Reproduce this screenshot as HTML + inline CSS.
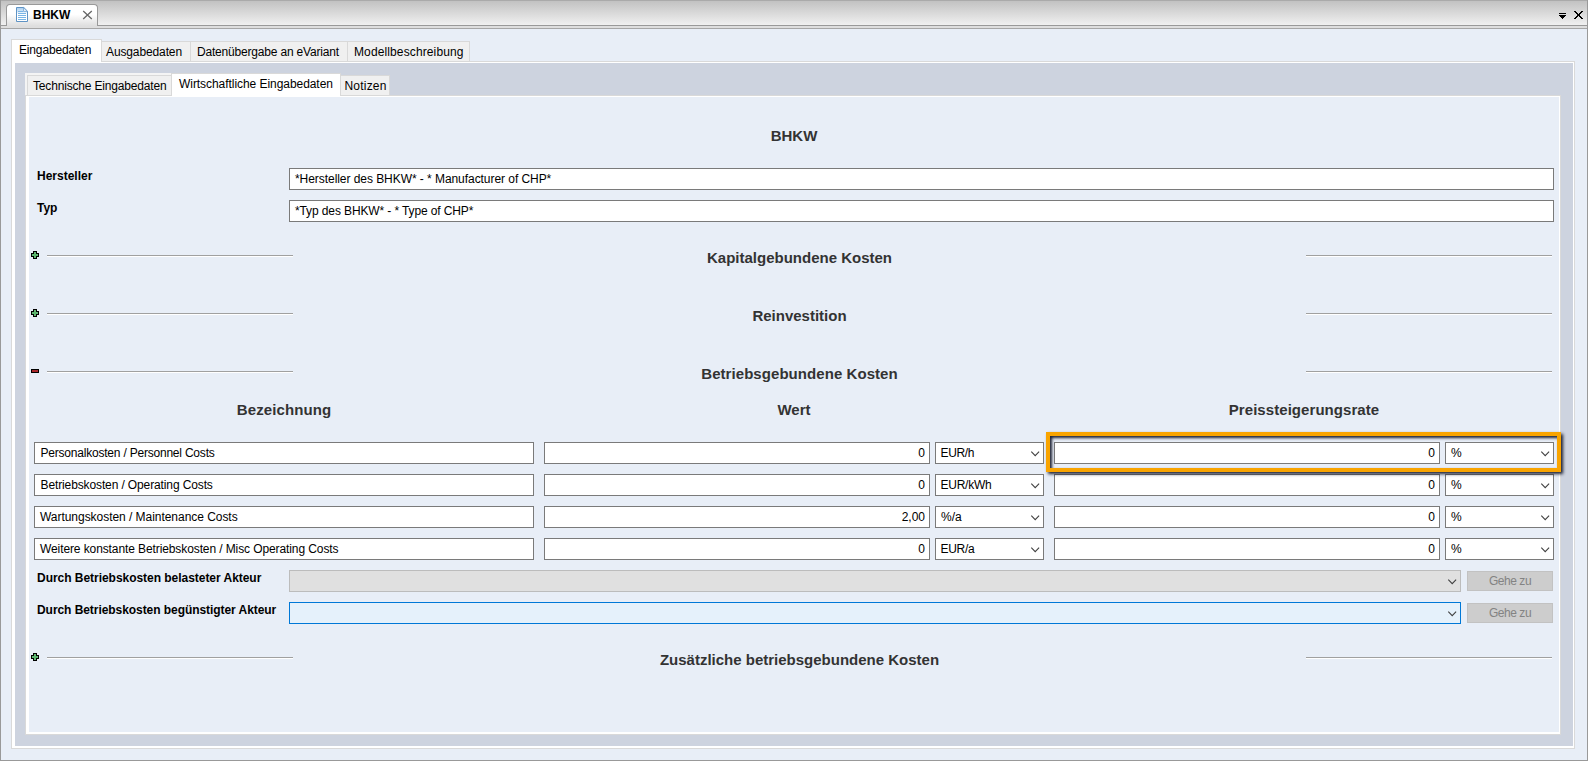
<!DOCTYPE html>
<html lang="de">
<head>
<meta charset="utf-8">
<title>BHKW</title>
<style>
html,body{margin:0;padding:0;}
body{width:1588px;height:761px;overflow:hidden;position:relative;background:#e8eef7;
  font-family:"Liberation Sans",sans-serif;font-size:12px;color:#000;}
.a{position:absolute;box-sizing:border-box;}
.t{position:absolute;white-space:nowrap;line-height:16px;font-size:12px;}
.b{font-weight:bold;}
.h{position:absolute;white-space:nowrap;font-weight:bold;font-size:15px;line-height:18px;color:#333;text-align:center;}
.box{position:absolute;box-sizing:border-box;background:#fff;border:1px solid #7a7a7a;height:22px;}
.ln{position:absolute;height:1px;background:#a0a0a0;box-shadow:0 1px 0 #fff;}
.tab{position:absolute;box-sizing:border-box;background:#f0f0f0;border:1px solid #d9d9d9;}
</style>
</head>
<body>
<!-- window frame / header -->
<div class="a" id="hdr" style="left:0;top:0;width:1588px;height:25px;background:linear-gradient(#c2c2c2,#f0f0f0);border-top:1px solid #aaa;"></div>
<div class="a" style="left:0;top:25px;width:1588px;height:1px;background:#999;"></div>
<div class="a" style="left:0;top:26px;width:1588px;height:2px;background:#dedede;"></div>
<div class="a" style="left:0;top:28px;width:1588px;height:1px;background:#a6a6a6;"></div>
<div class="a" style="left:0;top:0;width:1px;height:761px;background:#999;"></div>
<div class="a" style="left:1587px;top:0;width:1px;height:761px;background:#999;"></div>
<div class="a" style="left:0;top:760px;width:1588px;height:1px;background:#999;"></div>
<!-- document tab -->
<div class="a" id="doctab" style="left:6px;top:4px;width:92px;height:22px;border:1px solid #999;border-bottom:none;border-radius:4px 4px 0 0;background:linear-gradient(#fff 0%,#fff 45%,#dedede 100%);"></div>
<svg class="a" style="left:15px;top:6px;" width="14" height="17" viewBox="0 0 14 17">
  <defs><linearGradient id="dg" x1="0" y1="0" x2="0" y2="1"><stop offset="0" stop-color="#a9cdee"/><stop offset="0.3" stop-color="#d6e8f8"/><stop offset="0.45" stop-color="#fff"/><stop offset="1" stop-color="#fff"/></linearGradient></defs>
  <path d="M1.5 1.5h7.3l3.7 3.7v10.3h-11z" fill="url(#dg)" stroke="#5f93c4" stroke-width="1"/>
  <path d="M8.6 1.8v3.6h3.6z" fill="#fff" stroke="#6c9fd0" stroke-width="0.8"/>
  <path d="M3 5.5h5.2M3 7.5h8M3 9.5h8M3 11.5h8M3 13.5h8" stroke="#7ab5e6" stroke-width="1"/>
</svg>
<div class="t b" id="t_doc" style="left:33px;top:7px;">BHKW</div>
<svg class="a" style="left:82px;top:10px;" width="11" height="10" viewBox="0 0 11 10"><path d="M1.2 1l8.6 8M9.8 1l-8.6 8" stroke="#666" stroke-width="1.3" fill="none"/></svg>
<!-- header right icons -->
<svg class="a" style="left:1559px;top:13px;" width="7" height="6" viewBox="0 0 7 6" shape-rendering="crispEdges"><path d="M0 0h7v1h-7zM0 2h7v1h-7zM1 3h5v1h-5zM2 4h3v1h-3zM3 5h1v1h-1z" fill="#000"/></svg>
<svg class="a" style="left:1574px;top:11px;" width="9" height="8" viewBox="0 0 9 8" shape-rendering="crispEdges"><path d="M0 0h2v1h-2zM7 0h2v1h-2zM1 1h2v1h-2zM6 1h2v1h-2zM2 2h2v1h-2zM5 2h2v1h-2zM3 3h3v1h-3zM3 4h3v1h-3zM2 5h2v1h-2zM5 5h2v1h-2zM1 6h2v1h-2zM6 6h2v1h-2zM0 7h2v1h-2zM7 7h2v1h-2z" fill="#000"/></svg>

<!-- outer tab pane -->
<div class="a" style="left:11px;top:61px;width:1564px;height:688px;background:#fff;border:1px solid #d9d9d9;"></div>
<div class="a" style="left:15px;top:63px;width:1558px;height:683px;background:#cdd3df;"></div>
<!-- outer tabs -->
<div class="tab" style="left:101px;top:41px;width:90px;height:21px;"></div>
<div class="tab" style="left:190px;top:41px;width:158px;height:21px;"></div>
<div class="tab" style="left:347px;top:41px;width:123px;height:21px;"></div>
<div class="a" style="left:11px;top:39px;width:91px;height:23px;background:#fff;border:1px solid #d9d9d9;border-bottom:none;"></div>
<div class="t" id="t_o1" style="left:19px;top:42px;letter-spacing:-0.16px;">Eingabedaten</div>
<div class="t" id="t_o2" style="left:106px;top:44px;letter-spacing:-0.12px;">Ausgabedaten</div>
<div class="t" id="t_o3" style="left:197px;top:44px;letter-spacing:-0.19px;">Datenübergabe an eVariant</div>
<div class="t" id="t_o4" style="left:354px;top:44px;letter-spacing:0.12px;">Modellbeschreibung</div>

<!-- inner tab pane -->
<div class="a" style="left:25px;top:73px;width:148px;height:23px;background:#f4f4f4;"></div>
<div class="a" style="left:25px;top:95px;width:1536px;height:640px;background:#fff;border:1px solid #d9d9d9;"></div>
<div class="a" style="left:29px;top:97px;width:1530px;height:635px;background:#e8eef7;"></div>
<div class="tab" style="left:27px;top:75px;width:146px;height:21px;"></div>
<div class="tab" style="left:340px;top:75px;width:50px;height:21px;"></div>
<div class="a" style="left:171px;top:73px;width:170px;height:23px;background:#fff;border:1px solid #d9d9d9;border-bottom:none;"></div>
<div class="t" id="t_i1" style="left:33px;top:78px;letter-spacing:-0.17px;">Technische Eingabedaten</div>
<div class="t" id="t_i2" style="left:179px;top:76px;letter-spacing:-0.055px;">Wirtschaftliche Eingabedaten</div>
<div class="t" id="t_i3" style="left:344.5px;top:78px;letter-spacing:0.2px;">Notizen</div>

<!-- CONTENT -->
<div class="h" id="h_title" style="left:594px;width:400px;top:127px;">BHKW</div>
<div class="t b" id="l_her" style="left:37px;top:168px;">Hersteller</div>
<div class="box" style="left:289px;top:168px;width:1265px;"></div>
<div class="t" id="v_her" style="left:295px;top:171px;letter-spacing:-0.055px;">*Hersteller des BHKW* - * Manufacturer of CHP*</div>
<div class="t b" id="l_typ" style="left:37px;top:200px;">Typ</div>
<div class="box" style="left:289px;top:200px;width:1265px;"></div>
<div class="t" id="v_typ" style="left:295px;top:203px;letter-spacing:-0.115px;">*Typ des BHKW* - * Type of CHP*</div>
<svg class="a" style="left:31px;top:251px;" width="8" height="8" viewBox="0 0 8 8"><path d="M2 0h4v2h2v4h-2v2h-4v-2h-2v-4h2z" fill="#000"/><path d="M3 1h2v2h2v2h-2v2h-2v-2h-2v-2h2z" fill="#5cb56f"/></svg>
<div class="ln" style="left:47px;top:255px;width:246px;"></div>
<div class="ln" style="left:1306px;top:255px;width:246px;"></div>
<div class="h" id="h_kap" style="left:500px;width:599px;top:249px;">Kapitalgebundene Kosten</div>
<svg class="a" style="left:31px;top:309px;" width="8" height="8" viewBox="0 0 8 8"><path d="M2 0h4v2h2v4h-2v2h-4v-2h-2v-4h2z" fill="#000"/><path d="M3 1h2v2h2v2h-2v2h-2v-2h-2v-2h2z" fill="#5cb56f"/></svg>
<div class="ln" style="left:47px;top:313px;width:246px;"></div>
<div class="ln" style="left:1306px;top:313px;width:246px;"></div>
<div class="h" id="h_rei" style="left:500px;width:599px;top:307px;">Reinvestition</div>
<svg class="a" style="left:31px;top:369px;" width="8" height="4" viewBox="0 0 8 4"><rect width="8" height="4" fill="#000"/><rect x="1" y="1" width="6" height="2" fill="#a9272b"/></svg>
<div class="ln" style="left:47px;top:371px;width:246px;"></div>
<div class="ln" style="left:1306px;top:371px;width:246px;"></div>
<div class="h" id="h_bet" style="left:500px;width:599px;top:365px;letter-spacing:0.06px;">Betriebsgebundene Kosten</div>
<div class="h" id="h_c1" style="left:34px;width:500px;top:401px;letter-spacing:0.1px;">Bezeichnung</div>
<div class="h" id="h_c2" style="left:544px;width:500px;top:401px;">Wert</div>
<div class="h" id="h_c3" style="left:1054px;width:500px;top:401px;letter-spacing:0.06px;">Preissteigerungsrate</div>
<div class="box" style="left:34px;top:442px;width:500px;"></div>
<div class="t" id="r0_n" style="left:40.5px;top:445px;letter-spacing:-0.21px;">Personalkosten / Personnel Costs</div>
<div class="box" style="left:544px;top:442px;width:386px;"></div>
<div class="t" id="r0_v" style="right:663px;top:445px;">0</div>
<div class="box" style="left:935px;top:442px;width:109px;"></div>
<div class="t" id="r0_u" style="left:940.5px;top:445px;letter-spacing:-0.35px;">EUR/h</div>
<svg class="a" style="left:1030px;top:451px;" width="11" height="7" viewBox="0 0 11 7"><path d="M1.3 0.7L5.2 4.6L9.1 0.7" stroke="#404040" stroke-width="1.1" fill="none"/></svg>
<div class="box" style="left:1054px;top:442px;width:386px;"></div>
<div class="t" id="r0_p" style="right:153px;top:445px;">0</div>
<div class="box" style="left:1445px;top:442px;width:109px;"></div>
<div class="t" id="r0_q" style="left:1451px;top:445px;">%</div>
<svg class="a" style="left:1540px;top:451px;" width="11" height="7" viewBox="0 0 11 7"><path d="M1.3 0.7L5.2 4.6L9.1 0.7" stroke="#404040" stroke-width="1.1" fill="none"/></svg>
<div class="box" style="left:34px;top:474px;width:500px;"></div>
<div class="t" id="r1_n" style="left:40.5px;top:477px;letter-spacing:-0.12px;">Betriebskosten / Operating Costs</div>
<div class="box" style="left:544px;top:474px;width:386px;"></div>
<div class="t" id="r1_v" style="right:663px;top:477px;">0</div>
<div class="box" style="left:935px;top:474px;width:109px;"></div>
<div class="t" id="r1_u" style="left:940.5px;top:477px;letter-spacing:-0.25px;">EUR/kWh</div>
<svg class="a" style="left:1030px;top:483px;" width="11" height="7" viewBox="0 0 11 7"><path d="M1.3 0.7L5.2 4.6L9.1 0.7" stroke="#404040" stroke-width="1.1" fill="none"/></svg>
<div class="box" style="left:1054px;top:474px;width:386px;"></div>
<div class="t" id="r1_p" style="right:153px;top:477px;">0</div>
<div class="box" style="left:1445px;top:474px;width:109px;"></div>
<div class="t" id="r1_q" style="left:1451px;top:477px;">%</div>
<svg class="a" style="left:1540px;top:483px;" width="11" height="7" viewBox="0 0 11 7"><path d="M1.3 0.7L5.2 4.6L9.1 0.7" stroke="#404040" stroke-width="1.1" fill="none"/></svg>
<div class="box" style="left:34px;top:506px;width:500px;"></div>
<div class="t" id="r2_n" style="left:40px;top:509px;letter-spacing:-0.04px;">Wartungskosten / Maintenance Costs</div>
<div class="box" style="left:544px;top:506px;width:386px;"></div>
<div class="t" id="r2_v" style="right:663px;top:509px;">2,00</div>
<div class="box" style="left:935px;top:506px;width:109px;"></div>
<div class="t" id="r2_u" style="left:941px;top:509px;">%/a</div>
<svg class="a" style="left:1030px;top:515px;" width="11" height="7" viewBox="0 0 11 7"><path d="M1.3 0.7L5.2 4.6L9.1 0.7" stroke="#404040" stroke-width="1.1" fill="none"/></svg>
<div class="box" style="left:1054px;top:506px;width:386px;"></div>
<div class="t" id="r2_p" style="right:153px;top:509px;">0</div>
<div class="box" style="left:1445px;top:506px;width:109px;"></div>
<div class="t" id="r2_q" style="left:1451px;top:509px;">%</div>
<svg class="a" style="left:1540px;top:515px;" width="11" height="7" viewBox="0 0 11 7"><path d="M1.3 0.7L5.2 4.6L9.1 0.7" stroke="#404040" stroke-width="1.1" fill="none"/></svg>
<div class="box" style="left:34px;top:538px;width:500px;"></div>
<div class="t" id="r3_n" style="left:40px;top:541px;letter-spacing:-0.1px;">Weitere konstante Betriebskosten / Misc Operating Costs</div>
<div class="box" style="left:544px;top:538px;width:386px;"></div>
<div class="t" id="r3_v" style="right:663px;top:541px;">0</div>
<div class="box" style="left:935px;top:538px;width:109px;"></div>
<div class="t" id="r3_u" style="left:940.5px;top:541px;letter-spacing:-0.3px;">EUR/a</div>
<svg class="a" style="left:1030px;top:547px;" width="11" height="7" viewBox="0 0 11 7"><path d="M1.3 0.7L5.2 4.6L9.1 0.7" stroke="#404040" stroke-width="1.1" fill="none"/></svg>
<div class="box" style="left:1054px;top:538px;width:386px;"></div>
<div class="t" id="r3_p" style="right:153px;top:541px;">0</div>
<div class="box" style="left:1445px;top:538px;width:109px;"></div>
<div class="t" id="r3_q" style="left:1451px;top:541px;">%</div>
<svg class="a" style="left:1540px;top:547px;" width="11" height="7" viewBox="0 0 11 7"><path d="M1.3 0.7L5.2 4.6L9.1 0.7" stroke="#404040" stroke-width="1.1" fill="none"/></svg>
<div class="a" id="hl" style="left:1046px;top:432px;width:515px;height:40px;border:4px solid #f9a400;box-shadow:2px 2px 3px rgba(16,20,38,.95), inset 2px 2px 3px rgba(16,20,38,.95);"></div>
<div class="t b" id="l_a1" style="left:37px;top:570px;letter-spacing:-0.035px;">Durch Betriebskosten belasteter Akteur</div>
<div class="box" style="left:289px;top:570px;width:1172px;background:#e0e0e0;border-color:#bcbcbc;"></div>
<svg class="a" style="left:1447px;top:579px;" width="11" height="7" viewBox="0 0 11 7"><path d="M1.3 0.7L5.2 4.6L9.1 0.7" stroke="#404040" stroke-width="1.1" fill="none"/></svg>
<div class="a" style="left:1467px;top:571px;width:86px;height:20px;background:#cdcdcd;border:1px solid #c2c2c2;"></div>
<div class="t" id="b_g1" style="left:1467px;width:86px;text-align:center;top:573px;color:#838383;letter-spacing:-0.45px;">Gehe zu</div>
<div class="t b" id="l_a2" style="left:37px;top:602px;letter-spacing:-0.06px;">Durch Betriebskosten begünstigter Akteur</div>
<div class="box" style="left:289px;top:602px;width:1172px;background:#e5f1fb;border-color:#0078d7;"></div>
<svg class="a" style="left:1447px;top:611px;" width="11" height="7" viewBox="0 0 11 7"><path d="M1.3 0.7L5.2 4.6L9.1 0.7" stroke="#404040" stroke-width="1.1" fill="none"/></svg>
<div class="a" style="left:1467px;top:603px;width:86px;height:20px;background:#cdcdcd;border:1px solid #c2c2c2;"></div>
<div class="t" id="b_g2" style="left:1467px;width:86px;text-align:center;top:605px;color:#838383;letter-spacing:-0.45px;">Gehe zu</div>
<svg class="a" style="left:31px;top:653px;" width="8" height="8" viewBox="0 0 8 8"><path d="M2 0h4v2h2v4h-2v2h-4v-2h-2v-4h2z" fill="#000"/><path d="M3 1h2v2h2v2h-2v2h-2v-2h-2v-2h2z" fill="#5cb56f"/></svg>
<div class="ln" style="left:47px;top:657px;width:246px;"></div>
<div class="ln" style="left:1306px;top:657px;width:246px;"></div>
<div class="h" id="h_zus" style="left:500px;width:599px;top:651px;">Zusätzliche betriebsgebundene Kosten</div>
</body>
</html>
